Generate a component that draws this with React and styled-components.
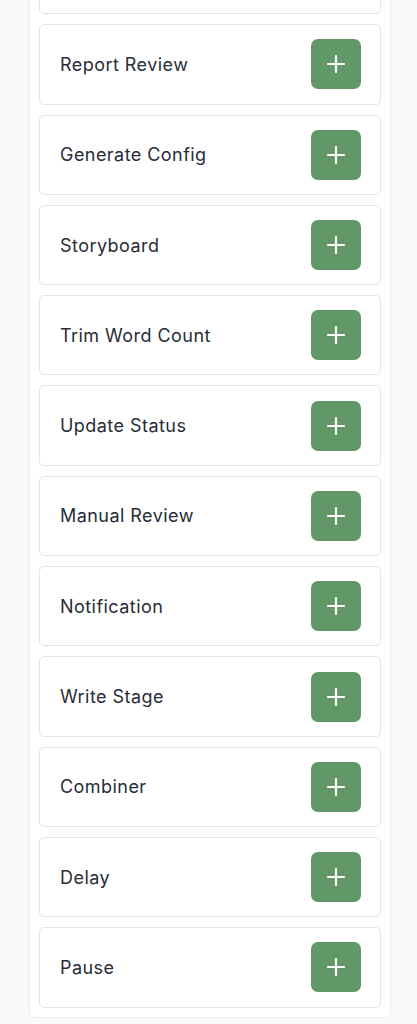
import { createGlobalStyle, styled } from 'styled-components';

const GlobalStyle = createGlobalStyle`
    html, body {
        margin: 0;
        padding: 0;
        background-color: #f8f9fb;
        font-family: Inter, "Noto Sans", "Liberation Sans", sans-serif;
        overflow: hidden;
    }
`;

const Page = styled.div`
    width: 417px;
    height: 1024px;
    overflow: hidden;
    padding: 0 26px 0 29px;
    box-sizing: border-box;
`;

const Panel = styled.div`
    margin-top: -76px;
    background-color: #ffffff;
    border: 1px solid #ebecef;
    border-radius: 6px;
    padding: 9px;
    display: flex;
    flex-direction: column;
    gap: 10px;
`;

const Card = styled.div`
    height: 80.3px;
    box-sizing: border-box;
    display: flex;
    align-items: center;
    justify-content: space-between;
    padding: 0 19px 0 20px;
    background-color: #ffffff;
    border: 1px solid #e3e5e8;
    border-radius: 5px;
`;

const Title = styled.span`
    font-size: 18px;
    color: #272c37;
    letter-spacing: 0.45px;
`;

const AddButton = styled.button`
    width: 50px;
    height: 50px;
    margin-left: auto;
    border: none;
    border-radius: 7px;
    background-color: #629868;
    color: #ffffff;
    display: flex;
    align-items: center;
    justify-content: center;
    padding: 0;
    cursor: pointer;
`;

const PlusIcon = () => (
    <svg width="20" height="20" viewBox="0 0 20 20" fill="none">
        <path d="M10 2v16M2 10h16" stroke="currentColor" strokeWidth="2.2" strokeLinecap="round" />
    </svg>
);

const items = [
    '',
    'Report Review',
    'Generate Config',
    'Storyboard',
    'Trim Word Count',
    'Update Status',
    'Manual Review',
    'Notification',
    'Write Stage',
    'Combiner',
    'Delay',
    'Pause',
];

export default function App() {
    return (
        <Page>
            <GlobalStyle />
            <Panel>
                {items.map((name, i) => (
                    <Card key={i}>
                        {name && <Title>{name}</Title>}
                        <AddButton type="button" aria-label={`Add ${name}`}>
                            <PlusIcon />
                        </AddButton>
                    </Card>
                ))}
            </Panel>
        </Page>
    );
}
